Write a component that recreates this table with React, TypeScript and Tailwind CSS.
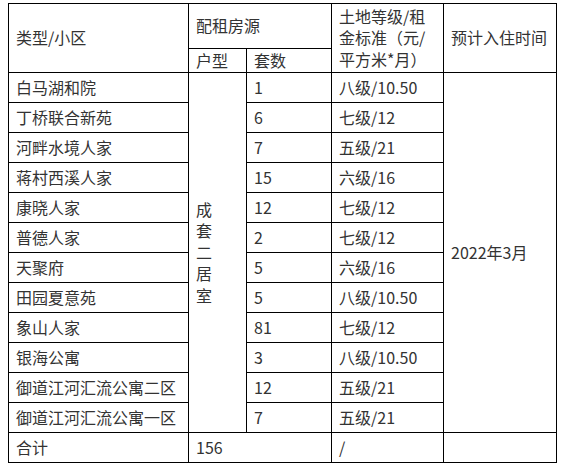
import React from "react";

const rows: [string, string, string][] = [
  ["白马湖和院", "1", "八级/10.50"],
  ["丁桥联合新苑", "6", "七级/12"],
  ["河畔水境人家", "7", "五级/21"],
  ["蒋村西溪人家", "15", "六级/16"],
  ["康晓人家", "12", "七级/12"],
  ["普德人家", "2", "七级/12"],
  ["天聚府", "5", "六级/16"],
  ["田园夏意苑", "5", "八级/10.50"],
  ["象山人家", "81", "七级/12"],
  ["银海公寓", "3", "八级/10.50"],
  ["御道江河汇流公寓二区", "12", "五级/21"],
  ["御道江河汇流公寓一区", "7", "五级/21"],
];

const cell = "border border-black px-[7px] py-0 align-middle text-left font-normal";

export default function App() {
  return (
    <div
      className="bg-white w-[564px] h-[473px] pl-[8px] pt-[3px] text-[16px] leading-[21.5px] text-[#333333]"
      style={{ fontFamily: '"Microsoft YaHei", "Noto Sans CJK SC", "Noto Sans", sans-serif' }}
    >
      <table className="border-collapse table-fixed w-[548px]">
        <colgroup>
          <col className="w-[180px]" />
          <col className="w-[58px]" />
          <col className="w-[85px]" />
          <col className="w-[112px]" />
          <col className="w-[113px]" />
        </colgroup>
        <tbody>
          <tr className="h-[45px]">
            <td rowSpan={2} className={cell}>
              类型/小区
            </td>
            <td colSpan={2} className={cell}>
              配租房源
            </td>
            <td rowSpan={2} className={cell}>
              土地等级/租
              <br />
              金标准（元/
              <br />
              平方米*月）
            </td>
            <td rowSpan={2} className={cell}>
              预计入住时间
            </td>
          </tr>
          <tr className="h-[24px]">
            <td className={cell}>户型</td>
            <td className={cell}>套数</td>
          </tr>
          {rows.map((r, i) => (
            <tr key={r[0]} className="h-[30px]">
              <td className={cell}>{r[0]}</td>
              {i === 0 && (
                <td rowSpan={12} className={cell}>
                  成<br />套<br />二<br />居<br />室
                </td>
              )}
              <td className={cell}>{r[1]}</td>
              <td className={cell}>{r[2]}</td>
              {i === 0 && (
                <td rowSpan={12} className={cell}>
                  2022年3月
                </td>
              )}
            </tr>
          ))}
          <tr className="h-[30px]">
            <td className={cell}>合计</td>
            <td colSpan={2} className={cell}>
              156
            </td>
            <td className={cell}>/</td>
            <td className={cell}></td>
          </tr>
        </tbody>
      </table>
    </div>
  );
}
